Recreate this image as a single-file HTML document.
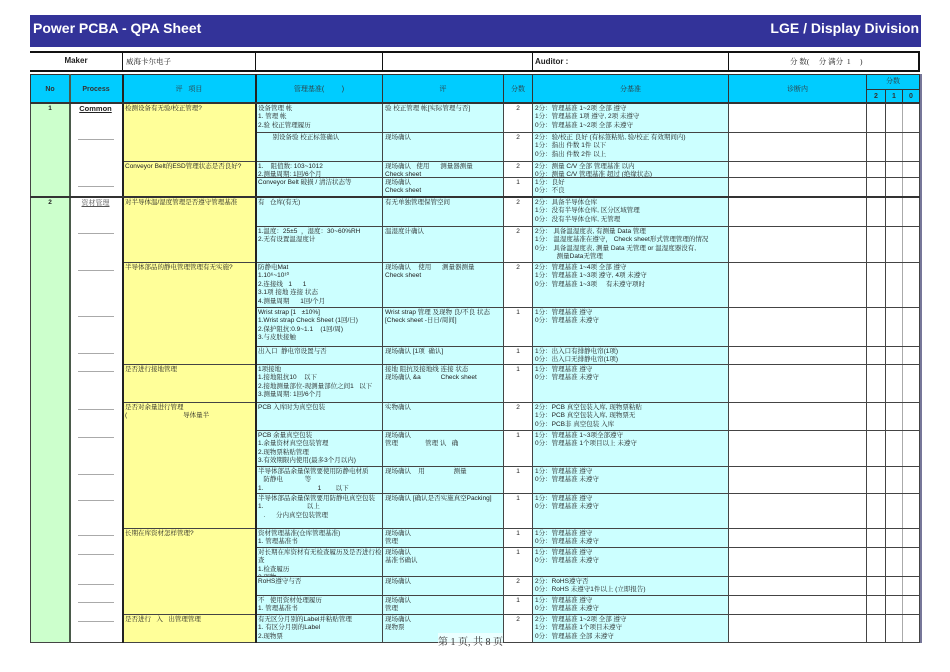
<!DOCTYPE html>
<html><head><meta charset="utf-8"><style>
*{margin:0;padding:0;box-sizing:border-box}
body{width:950px;height:672px;background:#fff;position:relative;overflow:hidden;font-family:"Liberation Sans","Noto Sans CJK SC",sans-serif;color:#222}
.a{position:absolute}
.c{position:absolute;border:1px solid #444;font-size:6.5px;line-height:8.4px;padding:1px 2px;overflow:hidden;font-family:"Liberation Sans","Noto Serif CJK SC",serif;white-space:nowrap}
.cy{background:#ccffff}.ye{background:#ffff99}.gr{background:#ccffcc}.wh{background:#fff}
.h{background:#00ccff;text-align:center;font-size:7px;color:#333;border:1px solid #333}
.dash{position:absolute;left:78px;width:36px;height:1px;background:#aaa}
</style></head><body>
<div class="a" style="left:30px;top:15px;width:891px;height:32px;background:#333399"></div>
<div class="a" style="left:33px;top:20px;color:#fff;font-weight:bold;font-size:14px">Power PCBA - QPA Sheet</div>
<div class="a" style="right:31px;top:20px;color:#fff;font-weight:bold;font-size:14px">LGE / Display Division</div>

<div class="a" style="left:30px;top:51px;width:890px;height:21px;border-top:2px solid #111;border-bottom:2px solid #111"></div>
<div class="a" style="left:30px;top:51px;width:92px;height:21px;font-size:8px;font-weight:bold;text-align:center;line-height:20px">Maker</div>
<div class="a" style="left:122px;top:51px;width:1px;height:21px;background:#111"></div>
<div class="a" style="left:126px;top:51px;font-size:7.5px;line-height:21px;font-family:'Liberation Serif','Noto Serif CJK SC',serif">威海卡尔电子</div>
<div class="a" style="left:255px;top:51px;width:1px;height:21px;background:#111"></div>
<div class="a" style="left:382px;top:51px;width:1px;height:21px;background:#111"></div>
<div class="a" style="left:532px;top:51px;width:1px;height:21px;background:#111"></div>
<div class="a" style="left:535px;top:51px;font-size:8px;font-weight:bold;line-height:21px">Auditor :</div>
<div class="a" style="left:728px;top:51px;width:1px;height:21px;background:#111"></div>
<div class="a" style="left:790px;top:51px;font-size:7.5px;line-height:21px;font-family:'Liberation Serif','Noto Serif CJK SC',serif">分 数(&nbsp;&nbsp;&nbsp;&nbsp;&nbsp;分 满分 &nbsp;1&nbsp;&nbsp;&nbsp;&nbsp;&nbsp;)</div>
<div class="a" style="left:918px;top:51px;width:2px;height:21px;background:#111"></div>

<div class="c h" style="left:30px;top:74px;width:40px;height:30px;font-weight:bold;line-height:27px;font-family:'Liberation Sans',sans-serif">No</div>
<div class="c h" style="left:69px;top:74px;width:54px;height:30px;font-weight:bold;line-height:27px;font-family:'Liberation Sans',sans-serif">Process</div>
<div class="c h" style="left:122px;top:74px;width:134px;height:30px;line-height:27px">评&nbsp;&nbsp;&nbsp;项目</div>
<div class="c h" style="left:255px;top:74px;width:128px;height:30px;line-height:27px">管理基准(&nbsp;&nbsp;&nbsp;&nbsp;&nbsp;&nbsp;&nbsp;&nbsp;&nbsp;)</div>
<div class="c h" style="left:382px;top:74px;width:122px;height:30px;line-height:27px">评</div>
<div class="c h" style="left:503px;top:74px;width:30px;height:30px;line-height:27px">分数</div>
<div class="c h" style="left:532px;top:74px;width:197px;height:30px;line-height:27px">分基准</div>
<div class="c h" style="left:728px;top:74px;width:139px;height:30px;line-height:27px">诊断内</div>
<div class="c h" style="left:866px;top:74px;width:54px;height:16px;line-height:12px">分数</div>
<div class="c h" style="left:866px;top:89px;width:20px;height:15px;line-height:12px;font-weight:bold">2</div>
<div class="c h" style="left:885px;top:89px;width:18px;height:15px;line-height:12px;font-weight:bold">1</div>
<div class="c h" style="left:902px;top:89px;width:18px;height:15px;line-height:12px;font-weight:bold">0</div>

<div class="c gr" style="left:30px;top:103px;width:40px;height:95px;text-align:center;font-weight:bold;font-family:'Liberation Sans',sans-serif">1</div>
<div class="c gr" style="left:30px;top:197px;width:40px;height:446px;text-align:center;font-weight:bold;font-family:'Liberation Sans',sans-serif">2</div>
<div class="c wh" style="left:69px;top:103px;width:54px;height:95px"></div>
<div class="c wh" style="left:69px;top:197px;width:54px;height:446px"></div>
<div class="a" style="left:69px;top:104px;width:53px;text-align:center;font-size:7.5px;font-weight:bold;text-decoration:underline">Common</div>
<div class="a" style="left:69px;top:198px;width:53px;text-align:center;font-size:7px;color:#555;text-decoration:underline;font-family:'Liberation Serif','Noto Serif CJK SC',serif">资材管理</div>
<div class="dash" style="top:139px"></div><div class="dash" style="top:186px"></div>
<div class="dash" style="top:233px"></div><div class="dash" style="top:270px"></div><div class="dash" style="top:316px"></div><div class="dash" style="top:353px"></div><div class="dash" style="top:371px"></div><div class="dash" style="top:409px"></div><div class="dash" style="top:437px"></div><div class="dash" style="top:474px"></div><div class="dash" style="top:500px"></div><div class="dash" style="top:535px"></div><div class="dash" style="top:554px"></div><div class="dash" style="top:584px"></div><div class="dash" style="top:602px"></div><div class="dash" style="top:621px"></div>

<div class="c ye" style="left:122px;top:103px;width:134px;height:59px">检测设备有无验/校正管理?</div>
<div class="c ye" style="left:122px;top:161px;width:134px;height:37px;white-space:normal">Conveyor Belt的ESD管理状态是否良好?</div>
<div class="c ye" style="left:122px;top:197px;width:134px;height:66px;white-space:normal">对半导体温/湿度管理是否遵守管理基准</div>
<div class="c ye" style="left:122px;top:262px;width:134px;height:103px">半导体部品的静电管理管理有无实施?</div>
<div class="c ye" style="left:122px;top:364px;width:134px;height:39px">是否进行接地管理</div>
<div class="c ye" style="left:122px;top:402px;width:134px;height:127px">是否对余量进行管理<br>(&nbsp;&nbsp;&nbsp;&nbsp;&nbsp;&nbsp;&nbsp;&nbsp;&nbsp;&nbsp;&nbsp;&nbsp;&nbsp;&nbsp;&nbsp;&nbsp;&nbsp;&nbsp;&nbsp;&nbsp;&nbsp;&nbsp;&nbsp;&nbsp;&nbsp;&nbsp;&nbsp;&nbsp;&nbsp;&nbsp;&nbsp;导体量半</div>
<div class="c ye" style="left:122px;top:528px;width:134px;height:87px">长期在库资材怎样管理?</div>
<div class="c ye" style="left:122px;top:614px;width:134px;height:29px">是否进行&nbsp;&nbsp;&nbsp;入&nbsp;&nbsp;&nbsp;出管理管理</div>

<div class="c cy" style="left:255px;top:103px;width:128px;height:30px">设备管理 帐<br>1. 管理 帐<br>2.验 校正管理履历</div>
<div class="c cy" style="left:382px;top:103px;width:122px;height:30px">验 校正管理 帐[实际管理与否]</div>
<div class="c cy" style="left:255px;top:132px;width:128px;height:30px">&nbsp;&nbsp;&nbsp;&nbsp;&nbsp;&nbsp;&nbsp;&nbsp;别设备验 校正标签确认</div>
<div class="c cy" style="left:382px;top:132px;width:122px;height:30px">现场确认</div>
<div class="c cy" style="left:255px;top:161px;width:128px;height:17px">1.&nbsp;&nbsp;&nbsp;&nbsp;阻值数: 103~1012<br>2.测量周期: 1回/6个月</div>
<div class="c cy" style="left:382px;top:161px;width:122px;height:17px">现场确认&nbsp;&nbsp;&nbsp;使用&nbsp;&nbsp;&nbsp;&nbsp;&nbsp;&nbsp;测量器测量<br>Check sheet</div>
<div class="c cy" style="left:255px;top:177px;width:128px;height:21px">Conveyor Belt 破损 / 清洁状态等</div>
<div class="c cy" style="left:382px;top:177px;width:122px;height:21px">现场确认<br>Check sheet</div>
<div class="c cy" style="left:255px;top:197px;width:128px;height:30px">有&nbsp;&nbsp;&nbsp;仓库(有无)</div>
<div class="c cy" style="left:382px;top:197px;width:122px;height:30px">有无单独管理保管空间</div>
<div class="c cy" style="left:255px;top:226px;width:128px;height:37px">1.温度：25±5&nbsp;&nbsp;，湿度：30~60%RH<br>2.无有设置温湿度计</div>
<div class="c cy" style="left:382px;top:226px;width:122px;height:37px">温湿度计确认</div>
<div class="c cy" style="left:255px;top:262px;width:128px;height:46px">防静电Mat<br>1.10⁶~10¹⁰<br>2.连接线&nbsp;&nbsp;&nbsp;1&nbsp;&nbsp;&nbsp;&nbsp;&nbsp;&nbsp;1<br>3.1项 接地 连接 状态<br>4.测量周期&nbsp;&nbsp;&nbsp;&nbsp;&nbsp;&nbsp;1回/个月</div>
<div class="c cy" style="left:382px;top:262px;width:122px;height:46px">现场确认&nbsp;&nbsp;&nbsp;&nbsp;使用&nbsp;&nbsp;&nbsp;&nbsp;&nbsp;&nbsp;测量器测量<br>Check sheet</div>
<div class="c cy" style="left:255px;top:307px;width:128px;height:40px">Wrist strap [1&nbsp;&nbsp;&nbsp;±10%]<br>1.Wrist strap Check Sheet (1回/日)<br>2.保护阻抗:0.9~1.1&nbsp;&nbsp;&nbsp;&nbsp;(1回/周)<br>3.与皮肤接触</div>
<div class="c cy" style="left:382px;top:307px;width:122px;height:40px">Wrist strap 管理 及现物 良/不良 状态<br>[Check sheet -日日/周间]</div>
<div class="c cy" style="left:255px;top:346px;width:128px;height:19px">出入口&nbsp;&nbsp;静电帘设置与否</div>
<div class="c cy" style="left:382px;top:346px;width:122px;height:19px">现场确认 [1项&nbsp;&nbsp;确认]</div>
<div class="c cy" style="left:255px;top:364px;width:128px;height:39px">1项接地<br>1.接地阻抗10&nbsp;&nbsp;&nbsp;&nbsp;以下<br>2.接地测量部位-现测量部位之间1&nbsp;&nbsp;&nbsp;以下<br>3.测量周期: 1回/6个月</div>
<div class="c cy" style="left:382px;top:364px;width:122px;height:39px">接地 阻抗及接地线 连接 状态<br>现场确认 &amp;a&nbsp;&nbsp;&nbsp;&nbsp;&nbsp;&nbsp;&nbsp;&nbsp;&nbsp;&nbsp;&nbsp;Check sheet</div>
<div class="c cy" style="left:255px;top:402px;width:128px;height:29px">PCB 入库时为真空包装</div>
<div class="c cy" style="left:382px;top:402px;width:122px;height:29px">实物确认</div>
<div class="c cy" style="left:255px;top:430px;width:128px;height:37px">PCB 余量真空包装<br>1.余量资材真空包装管理<br>2.现物票粘贴管理<br>3.有效期限内使用(最多3个月以内)</div>
<div class="c cy" style="left:382px;top:430px;width:122px;height:37px">现场确认<br>管理&nbsp;&nbsp;&nbsp;&nbsp;&nbsp;&nbsp;&nbsp;&nbsp;&nbsp;&nbsp;&nbsp;&nbsp;&nbsp;&nbsp;&nbsp;管理 认&nbsp;&nbsp;&nbsp;确</div>
<div class="c cy" style="left:255px;top:466px;width:128px;height:28px">半导体部品余量保管要使用防静电材质<br>&nbsp;&nbsp;&nbsp;防静电&nbsp;&nbsp;&nbsp;&nbsp;&nbsp;&nbsp;&nbsp;&nbsp;&nbsp;&nbsp;&nbsp;&nbsp;等<br>1.&nbsp;&nbsp;&nbsp;&nbsp;&nbsp;&nbsp;&nbsp;&nbsp;&nbsp;&nbsp;&nbsp;&nbsp;&nbsp;&nbsp;&nbsp;&nbsp;&nbsp;&nbsp;&nbsp;&nbsp;&nbsp;&nbsp;&nbsp;&nbsp;&nbsp;&nbsp;&nbsp;&nbsp;&nbsp;&nbsp;1&nbsp;&nbsp;&nbsp;&nbsp;&nbsp;&nbsp;&nbsp;&nbsp;以下</div>
<div class="c cy" style="left:382px;top:466px;width:122px;height:28px">现场确认&nbsp;&nbsp;&nbsp;&nbsp;用&nbsp;&nbsp;&nbsp;&nbsp;&nbsp;&nbsp;&nbsp;&nbsp;&nbsp;&nbsp;&nbsp;&nbsp;&nbsp;&nbsp;&nbsp;&nbsp;测量</div>
<div class="c cy" style="left:255px;top:493px;width:128px;height:36px">半导体部品余量保管要用防静电真空包装<br>1.&nbsp;&nbsp;&nbsp;&nbsp;&nbsp;&nbsp;&nbsp;&nbsp;&nbsp;&nbsp;&nbsp;&nbsp;&nbsp;&nbsp;&nbsp;&nbsp;&nbsp;&nbsp;&nbsp;&nbsp;&nbsp;&nbsp;&nbsp;&nbsp;以上<br>&nbsp;&nbsp;&nbsp;.&nbsp;&nbsp;&nbsp;&nbsp;&nbsp;&nbsp;分内真空包装管理</div>
<div class="c cy" style="left:382px;top:493px;width:122px;height:36px">现场确认 [确认是否实施真空Packing]</div>
<div class="c cy" style="left:255px;top:528px;width:128px;height:20px">资材管理基准(仓库管理基准)<br>1. 管理基准书</div>
<div class="c cy" style="left:382px;top:528px;width:122px;height:20px">现场确认<br>管理</div>
<div class="c cy" style="left:255px;top:547px;width:128px;height:30px">对长期在库资材有无检查履历及是否进行检<br>查<br>1.检查履历<br>2.现物</div>
<div class="c cy" style="left:382px;top:547px;width:122px;height:30px">现场确认<br>基准书确认</div>
<div class="c cy" style="left:255px;top:576px;width:128px;height:20px">RoHS遵守与否</div>
<div class="c cy" style="left:382px;top:576px;width:122px;height:20px">现场确认</div>
<div class="c cy" style="left:255px;top:595px;width:128px;height:20px">不&nbsp;&nbsp;&nbsp;使用资材处理履历<br>1. 管理基准书</div>
<div class="c cy" style="left:382px;top:595px;width:122px;height:20px">现场确认<br>管理</div>
<div class="c cy" style="left:255px;top:614px;width:128px;height:29px">有无区分月别的Label并粘贴管理<br>1. 有区分月别的Label<br>2.现物票</div>
<div class="c cy" style="left:382px;top:614px;width:122px;height:29px">现场确认<br>现物票</div>

<div class="c wh" style="left:503px;top:103px;width:30px;height:30px;text-align:center">2</div>
<div class="c cy" style="left:532px;top:103px;width:197px;height:30px">2分：管理基准 1~2项 全部 遵守<br>1分：管理基准 1项 遵守, 2项 未遵守<br>0分：管理基准 1~2项 全部 未遵守</div>
<div class="c wh" style="left:503px;top:132px;width:30px;height:30px;text-align:center">2</div>
<div class="c cy" style="left:532px;top:132px;width:197px;height:30px">2分：验/校正 良好 (有标签粘贴, 验/校正 有效期间内)<br>1分：指出 件数 1件 以下<br>0分：指出 件数 2件 以上</div>
<div class="c wh" style="left:503px;top:161px;width:30px;height:17px;text-align:center">2</div>
<div class="c cy" style="left:532px;top:161px;width:197px;height:17px">2分：测量 C/V 全部 管理基准 以内<br>0分：测量 C/V 管理基准 超过 (绝缘状态)</div>
<div class="c wh" style="left:503px;top:177px;width:30px;height:21px;text-align:center">1</div>
<div class="c cy" style="left:532px;top:177px;width:197px;height:21px">1分：良好<br>0分：不良</div>
<div class="c wh" style="left:503px;top:197px;width:30px;height:30px;text-align:center">2</div>
<div class="c cy" style="left:532px;top:197px;width:197px;height:30px">2分：具备半导体仓库<br>1分：没有半导体仓库, 区分区域管理<br>0分：没有半导体仓库, 无管理</div>
<div class="c wh" style="left:503px;top:226px;width:30px;height:37px;text-align:center">2</div>
<div class="c cy" style="left:532px;top:226px;width:197px;height:37px">2分： 具备温湿度表, 有测量 Data 管理<br>1分： 温湿度基准在遵守， Check sheet形式管理管理的情况<br>0分： 具备温湿度表, 测量 Data 无管理 or 温湿度器没有,<br>&nbsp;&nbsp;&nbsp;&nbsp;&nbsp;&nbsp;&nbsp;&nbsp;&nbsp;&nbsp;&nbsp;&nbsp;测量Data无管理</div>
<div class="c wh" style="left:503px;top:262px;width:30px;height:46px;text-align:center">2</div>
<div class="c cy" style="left:532px;top:262px;width:197px;height:46px">2分：管理基准 1~4项 全部 遵守<br>1分：管理基准 1~3项 遵守, 4项 未遵守<br>0分：管理基准 1~3项&nbsp;&nbsp;&nbsp;&nbsp;&nbsp;有未遵守项时</div>
<div class="c wh" style="left:503px;top:307px;width:30px;height:40px;text-align:center">1</div>
<div class="c cy" style="left:532px;top:307px;width:197px;height:40px">1分：管理基准 遵守<br>0分：管理基准 未遵守</div>
<div class="c wh" style="left:503px;top:346px;width:30px;height:19px;text-align:center">1</div>
<div class="c cy" style="left:532px;top:346px;width:197px;height:19px">1分：出入口有排静电帘(1项)<br>0分：出入口无排静电帘(1项)</div>
<div class="c wh" style="left:503px;top:364px;width:30px;height:39px;text-align:center">1</div>
<div class="c cy" style="left:532px;top:364px;width:197px;height:39px">1分：管理基准 遵守<br>0分：管理基准 未遵守</div>
<div class="c wh" style="left:503px;top:402px;width:30px;height:29px;text-align:center">2</div>
<div class="c cy" style="left:532px;top:402px;width:197px;height:29px">2分：PCB 真空包装入库, 现物票粘贴<br>1分：PCB 真空包装入库, 现物票无<br>0分：PCB非 真空包装 入库</div>
<div class="c wh" style="left:503px;top:430px;width:30px;height:37px;text-align:center">1</div>
<div class="c cy" style="left:532px;top:430px;width:197px;height:37px">1分：管理基准 1~3项全部遵守<br>0分：管理基准 1个项目以上 未遵守</div>
<div class="c wh" style="left:503px;top:466px;width:30px;height:28px;text-align:center">1</div>
<div class="c cy" style="left:532px;top:466px;width:197px;height:28px">1分：管理基准 遵守<br>0分：管理基准 未遵守</div>
<div class="c wh" style="left:503px;top:493px;width:30px;height:36px;text-align:center">1</div>
<div class="c cy" style="left:532px;top:493px;width:197px;height:36px">1分：管理基准 遵守<br>0分：管理基准 未遵守</div>
<div class="c wh" style="left:503px;top:528px;width:30px;height:20px;text-align:center">1</div>
<div class="c cy" style="left:532px;top:528px;width:197px;height:20px">1分：管理基准 遵守<br>0分：管理基准 未遵守</div>
<div class="c wh" style="left:503px;top:547px;width:30px;height:30px;text-align:center">1</div>
<div class="c cy" style="left:532px;top:547px;width:197px;height:30px">1分：管理基准 遵守<br>0分：管理基准 未遵守</div>
<div class="c wh" style="left:503px;top:576px;width:30px;height:20px;text-align:center">2</div>
<div class="c cy" style="left:532px;top:576px;width:197px;height:20px">2分：RoHS遵守否<br>0分：RoHS 未遵守1件以上 (立即报告)</div>
<div class="c wh" style="left:503px;top:595px;width:30px;height:20px;text-align:center">1</div>
<div class="c cy" style="left:532px;top:595px;width:197px;height:20px">1分：管理基准 遵守<br>0分：管理基准 未遵守</div>
<div class="c wh" style="left:503px;top:614px;width:30px;height:29px;text-align:center">2</div>
<div class="c cy" style="left:532px;top:614px;width:197px;height:29px">2分：管理基准 1~2项 全部 遵守<br>1分：管理基准 1个项目未遵守<br>0分：管理基准 全部 未遵守</div>

<svg class="a" style="left:0;top:0" width="950" height="672">
<g stroke="#444" stroke-width="1">
<line x1="728.5" y1="103" x2="728.5" y2="643"/>
<line x1="866.5" y1="103" x2="866.5" y2="643"/>
<line x1="885.5" y1="103" x2="885.5" y2="643"/>
<line x1="902.5" y1="103" x2="902.5" y2="643" stroke="#aaa"/>
<line x1="919.5" y1="103" x2="919.5" y2="643"/>
<line x1="728" y1="132.5" x2="920" y2="132.5"/><line x1="728" y1="161.5" x2="920" y2="161.5"/>
<line x1="728" y1="177.5" x2="920" y2="177.5"/><line x1="728" y1="197.5" x2="920" y2="197.5"/>
<line x1="728" y1="226.5" x2="920" y2="226.5"/><line x1="728" y1="262.5" x2="920" y2="262.5"/>
<line x1="728" y1="307.5" x2="920" y2="307.5"/><line x1="728" y1="346.5" x2="920" y2="346.5"/>
<line x1="728" y1="364.5" x2="920" y2="364.5"/><line x1="728" y1="402.5" x2="920" y2="402.5"/>
<line x1="728" y1="430.5" x2="920" y2="430.5"/><line x1="728" y1="466.5" x2="920" y2="466.5"/>
<line x1="728" y1="493.5" x2="920" y2="493.5"/><line x1="728" y1="528.5" x2="920" y2="528.5"/>
<line x1="728" y1="547.5" x2="920" y2="547.5"/><line x1="728" y1="576.5" x2="920" y2="576.5"/>
<line x1="728" y1="595.5" x2="920" y2="595.5"/><line x1="728" y1="614.5" x2="920" y2="614.5"/>
<line x1="728" y1="642.5" x2="920" y2="642.5"/>
</g>
<rect x="69" y="74" width="2" height="569" fill="#4a5a4a"/>
<rect x="122" y="74" width="2" height="569" fill="#222"/>
<rect x="255" y="74" width="2" height="569" fill="#222"/>
<rect x="30" y="196" width="890" height="2" fill="#333"/>
<rect x="30" y="102" width="890" height="2" fill="#333"/>
<rect x="920" y="74" width="2" height="569" fill="#777799"/>
</svg>
<div class="a" style="left:438px;top:633px;font-size:10px;color:#333;font-family:'Liberation Serif','Noto Serif CJK SC',serif;background:rgba(255,255,255,0.6)">第 1 页, 共 8 页</div>
</body></html>
